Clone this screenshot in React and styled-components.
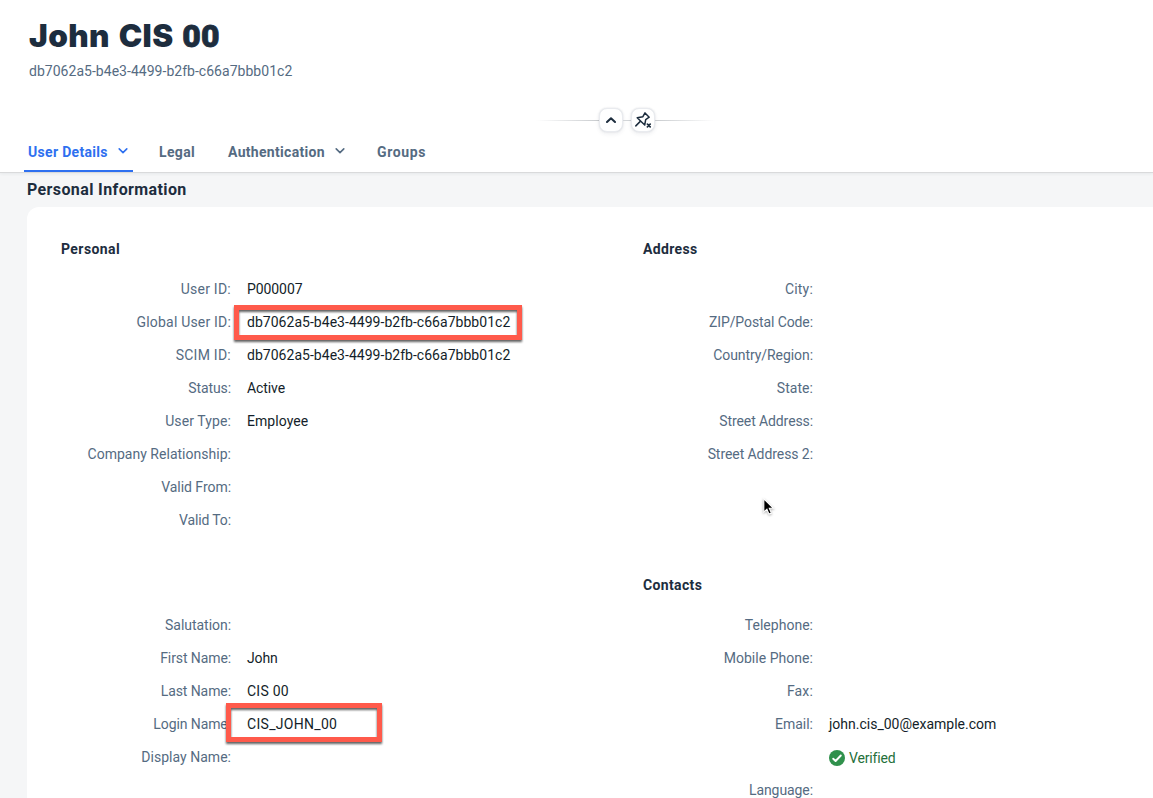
import React from "react";
import styled, { createGlobalStyle } from "styled-components";

const GlobalStyle = createGlobalStyle`
  *, *::before, *::after { box-sizing: border-box; }
  html, body { margin: 0; }
  body {
    overflow: hidden;
    background: #f5f6f7;
    color: #1d2d3e;
    font-family: Roboto, "Liberation Sans", sans-serif;
    font-size: 14px;
  }
`;

const Page = styled.div`
  position: relative;
  width: 100%;
  height: 798px;
  overflow: hidden;
`;

const Text = styled.span`
  white-space: nowrap;
  letter-spacing: ${({ $track = 0 }) => $track}px;
`;

const Header = styled.header`
  height: 173px;
  background: #fff;
  border-bottom: 1px solid #d9dadb;
  box-shadow: 0 1px 3px rgba(34, 53, 72, 0.07);
  display: flex;
  flex-direction: column;
`;

const Title = styled.h1`
  margin: 0;
  padding: 17px 0 0 29px;
  height: 61px;
  font-family: Inter, Roboto, sans-serif;
  font-size: 31.5px;
  line-height: 38px;
  font-weight: 900;
  letter-spacing: 0.4px;
  word-spacing: 2px;
`;

const Digits = styled.span`
  font-family: Roboto, sans-serif;
  font-size: 32px;
  letter-spacing: 0.3px;
  -webkit-text-stroke: 0.8px currentColor;
`;

const Subtitle = styled.div`
  padding-left: 29px;
  height: 47px;
  line-height: 20px;
  color: #556b82;
`;

const Divider = styled.div`
  display: flex;
  align-items: center;
  height: 24px;
  padding-left: 536px;
`;

const Rule = styled.div`
  width: ${({ $width }) => $width}px;
  height: 1px;
  background: ${({ $fade }) =>
    $fade ? `linear-gradient(to ${$fade}, #c8cbce, rgba(217, 217, 217, 0))` : "#d3d6d9"};
`;

const RoundButton = styled.button`
  display: grid;
  place-items: center;
  width: 24px;
  height: 24px;
  padding: 0;
  border: 1px solid #e9ebef;
  border-radius: 8px;
  background: #fff;
  box-shadow: 0 0 2px rgba(34, 53, 72, 0.14), 0 2px 4px rgba(34, 53, 72, 0.08);
  color: #1d2d3e;
`;

const Tabs = styled.nav`
  display: flex;
  flex: 1;
  padding-left: 24px;
`;

const Tab = styled.div`
  display: flex;
  gap: 10px;
  width: ${({ $width }) => $width}px;
  height: 40px;
  margin-right: ${({ $after }) => $after}px;
  padding: 10px 4px 0;
  line-height: 20px;
  font-weight: 700;
  color: ${({ $active }) => ($active ? "#2e70f0" : "#556b82")};
  border-bottom: 2px solid ${({ $active }) => ($active ? "#2e70f0" : "transparent")};

  svg { margin-top: 4px; }
`;

const SectionTitle = styled.h2`
  margin: 0;
  height: 34px;
  padding: 7px 0 0 27px;
  font-size: 16px;
  line-height: 20px;
  font-weight: 700;
`;

const Card = styled.section`
  margin-left: 27px;
  height: 620px;
  padding: 26px 0 0 34px;
  border-radius: 12px 0 0 0;
  background: #fff;
  display: grid;
  grid-template-columns: 582px 1fr;
  grid-template-rows: 304px 1fr;
  row-gap: 32px;
`;

const GroupTitle = styled.h3`
  margin: 0 0 8px;
  height: 32px;
  font-size: 14px;
  line-height: 32px;
  font-weight: 700;
`;

const Row = styled.div`
  display: grid;
  grid-template-columns: 170px 1fr;
  column-gap: 16px;
  height: ${({ $height = 33 }) => $height}px;
  line-height: 32px;
`;

const Label = styled(Text)`
  color: #556b82;
  justify-self: end;
`;

const Value = styled(Text)`
  color: #131e29;
`;

const Status = styled.div`
  display: flex;
  align-items: center;
  gap: 4px;
  grid-column: 2;
  height: 36px;
  color: #256f3a;
`;

const Highlight = styled.div`
  position: absolute;
  left: ${({ $x }) => $x}px;
  top: ${({ $y }) => $y}px;
  width: ${({ $w }) => $w}px;
  height: ${({ $h }) => $h}px;
  border: 5px solid #ff5a4b;
  filter: drop-shadow(0 2px 1px rgba(0, 0, 0, 0.62));
`;

const Pointer = styled.svg`
  position: absolute;
  left: 762px;
  top: 497px;
  filter: drop-shadow(0 1px 1px rgba(0, 0, 0, 0.3));
`;

const Chevron = ({ up }) => (
  <svg width="10" height="10" viewBox="0 0 10 10" fill="none" stroke="currentColor"
    strokeWidth={up ? 2 : 1.6} strokeLinecap="round" strokeLinejoin="round">
    <path d={up ? "M1 7 5 3.2 9 7" : "M1.2 2.9 5 6.6 8.8 2.9"} />
  </svg>
);

const UnpinIcon = () => (
  <svg width="18" height="18" viewBox="0 0 18 18" fill="none" stroke="currentColor"
    strokeWidth="1.5" strokeLinecap="round" strokeLinejoin="round">
    <path d="M11 1.9 15.2 6.2 11.7 8.6 10.7 14 3.2 6.8 8.9 5.7Z" />
    <path d="M6.3 10.4 1.8 14.9" />
    <path d="m13.4 13.1 2.8 2.8m0-2.8-2.8 2.8" strokeWidth="1.7" />
  </svg>
);

const CheckIcon = () => (
  <svg width="16" height="16" viewBox="0 0 16 16">
    <circle cx="8" cy="8" r="8" fill="#30914c" />
    <path d="m4.2 8.7 2.4 2.3L11.8 5.5" fill="none" stroke="#fff" strokeWidth="1.9"
      strokeLinecap="round" strokeLinejoin="round" />
  </svg>
);

const USER_UUID = "db7062a5-b4e3-4499-b2fb-c66a7bbb01c2";

const tabs = [
  { text: "User Details", track: 0.31, width: 109, after: 22, active: true, menu: true },
  { text: "Legal", track: 0.35, width: 44, after: 25 },
  { text: "Authentication", track: 0.31, width: 127, after: 22, menu: true },
  { text: "Groups", track: 0.65, width: 57, after: 0 },
];

const groups = [
  {
    title: "Personal", track: 0.42,
    rows: [
      ["User ID:", 0.25, "P000007", -0.08],
      ["Global User ID:", 0.19, USER_UUID, 0.03],
      ["SCIM ID:", 0.25, USER_UUID, 0.03],
      ["Status:", -0.1, "Active", -0.1],
      ["User Type:", 0.1, "Employee", 0.05],
      ["Company Relationship:", 0.02],
      ["Valid From:", -0.04],
      ["Valid To:", -0.13],
    ],
  },
  {
    title: "Address", track: 0.35,
    rows: [
      ["City:", 0.2],
      ["ZIP/Postal Code:", -0.1],
      ["Country/Region:", -0.07],
      ["State:", 0.05],
      ["Street Address:", -0.1],
      ["Street Address 2:", -0.07],
    ],
  },
  {
    title: "", track: 0,
    rows: [
      ["Salutation:", -0.04],
      ["First Name:", -0.1, "John", -0.15],
      ["Last Name:", -0.08, "CIS 00", 0.25],
      ["Login Name:", -0.09, "CIS_JOHN_00", 0.3],
      ["Display Name:", 0.02],
    ],
  },
  {
    title: "Contacts", track: 0.36,
    rows: [
      ["Telephone:", 0.02],
      ["Mobile Phone:", 0.04],
      ["Fax:", 0.15],
      ["Email:", 0, "john.cis_00@example.com", 0, "Verified"],
      ["Language:", -0.08],
    ],
  },
];

const Field = ({ row: [label, labelTrack, value, valueTrack, status] }) => (
  <Row $height={status ? 66 : 33}>
    <Label $track={labelTrack}>{label}</Label>
    {value && <Value $track={valueTrack}>{value}</Value>}
    {status && (
      <Status>
        <CheckIcon />
        <Text $track={-0.15}>{status}</Text>
      </Status>
    )}
  </Row>
);

export default function App() {
  return (
    <Page>
      <GlobalStyle />
      <Header>
        <Title>John CIS <Digits>00</Digits></Title>
        <Subtitle><Text $track={0.03}>{USER_UUID}</Text></Subtitle>
        <Divider>
          <Rule $width={63} $fade="left" />
          <RoundButton aria-label="Collapse header"><Chevron up /></RoundButton>
          <Rule $width={8} />
          <RoundButton aria-label="Unpin header"><UnpinIcon /></RoundButton>
          <Rule $width={60} $fade="right" />
        </Divider>
        <Tabs>
          {tabs.map((t) => (
            <Tab key={t.text} $width={t.width} $after={t.after} $active={t.active}>
              <Text $track={t.track}>{t.text}</Text>
              {t.menu && <Chevron />}
            </Tab>
          ))}
        </Tabs>
      </Header>
      <SectionTitle><Text $track={0.38}>Personal Information</Text></SectionTitle>
      <Card>
        {groups.map((g, i) => (
          <div key={i}>
            <GroupTitle><Text $track={g.track}>{g.title}</Text></GroupTitle>
            {g.rows.map((row) => <Field key={row[0]} row={row} />)}
          </div>
        ))}
      </Card>
      <Highlight $x={234} $y={305} $w={288} $h={35} />
      <Highlight $x={226} $y={703} $w={156} $h={39} />
      <Pointer width="14" height="20" viewBox="0 0 14 20">
        <path d="M1.8 1.8v13.3l3.1-2.9 2.1 4.9 2.4-1-2.1-4.8h4.2Z" fill="#000" stroke="#fff" strokeWidth="1.1" />
      </Pointer>
    </Page>
  );
}
